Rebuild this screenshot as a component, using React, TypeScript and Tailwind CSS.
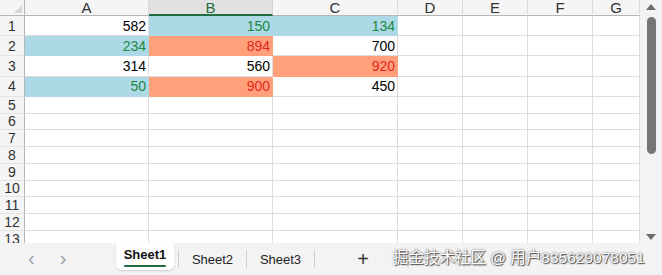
import React from 'react'

type Cell = { v?: number; bg?: 'blue' | 'salmon'; color?: 'green' | 'red' }

const COLS = [
  { key: 'A', w: 'w-[124px]' },
  { key: 'B', w: 'w-[124px]' },
  { key: 'C', w: 'w-[125px]' },
  { key: 'D', w: 'w-[65px]' },
  { key: 'E', w: 'w-[65px]' },
  { key: 'F', w: 'w-[65px]' },
  { key: 'G', w: 'w-[47px]' },
]

const DATA: Cell[][] = [
  [{ v: 582 }, { v: 150, bg: 'blue', color: 'green' }, { v: 134, bg: 'blue', color: 'green' }],
  [{ v: 234, bg: 'blue', color: 'green' }, { v: 894, bg: 'salmon', color: 'red' }, { v: 700 }],
  [{ v: 314 }, { v: 560 }, { v: 920, bg: 'salmon', color: 'red' }],
  [{ v: 50, bg: 'blue', color: 'green' }, { v: 900, bg: 'salmon', color: 'red' }, { v: 450 }],
]

function DataCell({ cell, w }: { cell?: Cell; w: string }) {
  const bg =
    cell?.bg === 'blue'
      ? 'bg-[#add8e6] border-transparent'
      : cell?.bg === 'salmon'
        ? 'bg-[#ffa07a] border-transparent'
        : 'bg-white border-[#dcdcdc]'
  const color =
    cell?.color === 'green' ? 'text-[#1b8a3e]' : cell?.color === 'red' ? 'text-[#e3261c]' : 'text-black'
  return (
    <div className={`${w} ${bg} ${color} shrink-0 border-r border-b flex items-center justify-end pr-[2px]`}>
      {cell?.v ?? ''}
    </div>
  )
}

function Row({ n, h }: { n: number; h: string }) {
  const cells = DATA[n - 1]
  return (
    <div className={`flex ${h} shrink-0`}>
      <div className="w-[25px] shrink-0 bg-[#f5f5f5] border-r border-[#b5b5b5] border-b border-b-[#e4e4e4] flex items-center justify-center text-[#333]">
        {n}
      </div>
      {COLS.map((c, i) => (
        <DataCell key={c.key} cell={cells?.[i]} w={c.w} />
      ))}
    </div>
  )
}

export default function App() {
  const rows = Array.from({ length: 13 }, (_, i) => i + 1)

  return (
    <div
      className="relative w-[662px] h-[275px] overflow-hidden bg-[#f3f3f3] flex flex-col text-[14px] leading-none"
      style={{ fontFamily: '"Liberation Sans", Arial, sans-serif' }}
    >
      <div className="flex h-[243px] shrink-0">
        {/* grid */}
        <div className="w-[640px] flex flex-col overflow-hidden bg-white">
          {/* column headers */}
          <div className="flex h-[16px] shrink-0">
            <div className="w-[25px] shrink-0 bg-[#f5f5f5] border-r border-b border-[#b5b5b5] relative">
              <div className="absolute right-[2px] bottom-[2px] w-0 h-0 border-l-[8px] border-l-transparent border-b-[8px] border-b-[#d6d6d6]" />
            </div>
            {COLS.map((c) =>
              c.key === 'B' ? (
                <div
                  key={c.key}
                  className={`${c.w} shrink-0 bg-[#e1e1e1] border-b-2 border-[#1e6e42] border-r border-r-[#d4d4d4] flex items-center justify-center text-[#1e6e42] text-[15px]`}
                >
                  {c.key}
                </div>
              ) : (
                <div
                  key={c.key}
                  className={`${c.w} shrink-0 bg-[#f5f5f5] border-b border-[#b5b5b5] border-r border-r-[#dcdcdc] flex items-center justify-center text-[#333] text-[15px]`}
                >
                  {c.key}
                </div>
              ),
            )}
          </div>
          {rows.map((n) => (
            <Row key={n} n={n} h={n <= 4 ? 'h-[20.2px]' : 'h-[16.75px]'} />
          ))}
        </div>

        {/* vertical scrollbar */}
        <div className="w-[22px] shrink-0 bg-[#f3f3f3] flex flex-col items-center pt-[4px] pb-[3px]">
          <div className="w-0 h-0 border-l-[5px] border-r-[5px] border-b-[6px] border-l-transparent border-r-transparent border-b-[#6e6e6e]" />
          <div className="mt-[7px] w-[9px] h-[137px] rounded-full bg-[#767676]" />
          <div className="flex-1" />
          <div className="w-0 h-0 border-l-[5px] border-r-[5px] border-t-[6px] border-l-transparent border-r-transparent border-t-[#6e6e6e]" />
        </div>
      </div>

      {/* sheet tab bar */}
      <div className="flex-1 flex items-start text-[13px] text-[#222]">
        <div className="w-[116px] shrink-0 flex items-center h-[30px] pl-[28px] gap-[25px] text-[#a0a0a0] text-[20px] font-light">
          <span>‹</span>
          <span>›</span>
        </div>
        <div className="w-[58px] h-[27px] bg-white rounded-b-[5px] shadow-[0_1px_2px_rgba(0,0,0,0.15)] flex flex-col items-center justify-center pt-[1px]">
          <span className="font-bold text-[#111]">Sheet1</span>
          <span className="mt-[4px] w-[42px] h-[2px] bg-[#1e6e42] rounded" />
        </div>
        <div className="w-[4px]" />
        <div className="w-px h-[18px] mt-[7px] bg-[#cfcfcf]" />
        <div className="w-[67px] h-[32px] flex items-center justify-center">Sheet2</div>
        <div className="w-px h-[18px] mt-[7px] bg-[#cfcfcf]" />
        <div className="w-[67px] h-[32px] flex items-center justify-center">Sheet3</div>
        <div className="w-px h-[18px] mt-[7px] bg-[#cfcfcf]" />
        <div className="w-[96px] h-[32px] flex items-center justify-center text-[20px] font-light text-[#333]">+</div>
      </div>

      {/* watermark */}
      <div
        className="absolute left-[393px] top-[250px] text-[15.5px] text-white whitespace-nowrap [text-shadow:0_0_2px_#444,1px_1px_1px_#555]"
        style={{ fontFamily: '"Liberation Sans", "Noto Sans CJK SC", sans-serif' }}
      >
        掘金技术社区 @ 用户835629078051
      </div>
    </div>
  )
}
